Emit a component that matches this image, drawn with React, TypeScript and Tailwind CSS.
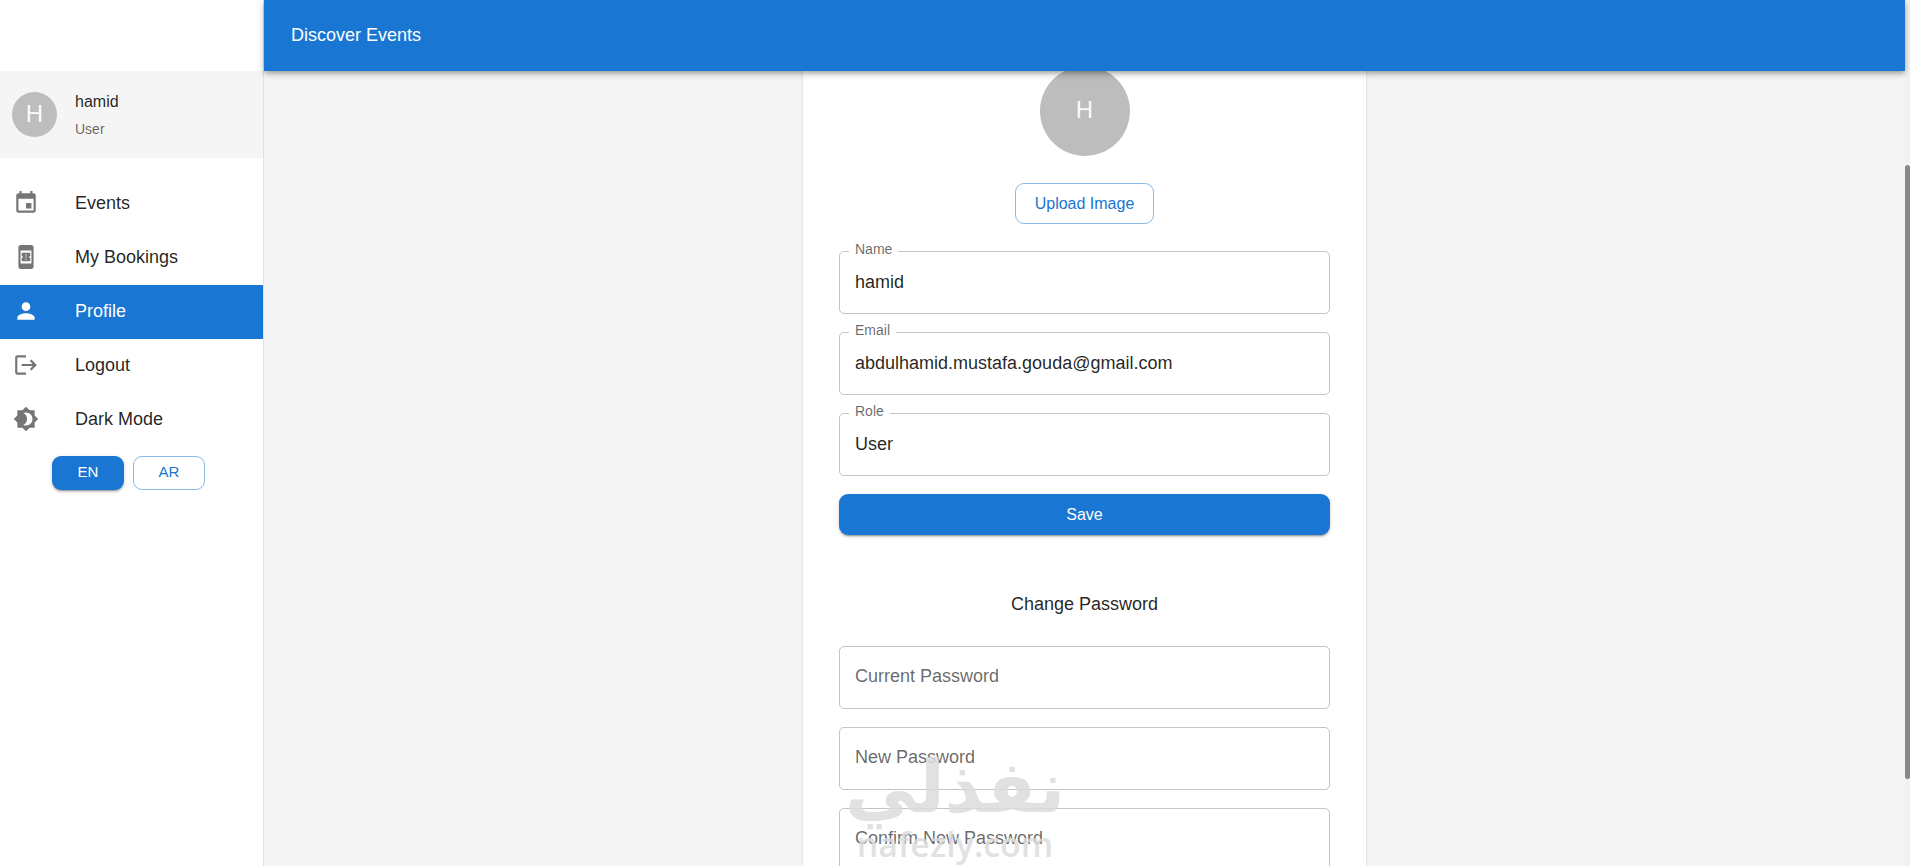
import type { InputHTMLAttributes } from "react";
import { MdBookOnline, MdBrightness4, MdEvent, MdLogout, MdPerson } from "react-icons/md";

const navItems = [
  { label: "Events", icon: MdEvent },
  { label: "My Bookings", icon: MdBookOnline },
  { label: "Profile", icon: MdPerson, active: true },
  { label: "Logout", icon: MdLogout },
  { label: "Dark Mode", icon: MdBrightness4 },
];

const profileFields = [
  { id: "name", label: "Name", value: "hamid", type: "text" },
  { id: "email", label: "Email", value: "abdulhamid.mustafa.gouda@gmail.com", type: "email" },
  { id: "role", label: "Role", value: "User", type: "text" },
];

const passwordFields = [
  { id: "current-password", label: "Current Password" },
  { id: "new-password", label: "New Password" },
  { id: "confirm-password", label: "Confirm New Password" },
];

function Sidebar() {
  return (
    <aside className="w-[264px] shrink-0 border-r border-[#e0e0e0] bg-white pt-[71px]">
      <div className="flex h-[87px] items-center gap-[18px] bg-[#f5f5f5] px-3">
        <div className="flex size-[45px] items-center justify-center rounded-full bg-[#bdbdbd] pb-0.5 text-2xl text-[#fafafa]">
          H
        </div>
        <div>
          <p className="text-base leading-7">hamid</p>
          <p className="text-sm leading-[26px] text-black/60">User</p>
        </div>
      </div>

      <nav className="mt-[19px]">
        {navItems.map(({ label, icon: Icon, active }) => (
          <a
            key={label}
            href="#"
            className={`flex h-[54px] items-center px-[13px] pb-0.5 text-lg ${active ? "bg-[#1976d2] text-white" : ""}`}
          >
            <span className={`w-[62px] ${active ? "text-white" : "text-black/54"}`}>
              <Icon size={26} />
            </span>
            {label}
          </a>
        ))}
      </nav>

      <div className="mt-[9px] flex gap-[9px] pl-[52px]">
        <button className="h-[34px] w-[72px] rounded-[9px] bg-[#1976d2] pb-0.5 text-[15px] text-white shadow-[0_3px_1px_-2px_rgba(0,0,0,0.2),0_2px_2px_0_rgba(0,0,0,0.14),0_1px_5px_0_rgba(0,0,0,0.12)]">
          EN
        </button>
        <button className="h-[34px] w-[72px] rounded-[9px] border border-[#1976d2]/50 pb-0.5 text-[15px] text-[#1976d2]">
          AR
        </button>
      </div>
    </aside>
  );
}

// Outlined input whose label sits in a notch of the border
function OutlinedField({ label, id, ...props }: InputHTMLAttributes<HTMLInputElement> & { label: string }) {
  return (
    <div className="relative">
      <label htmlFor={id} className="absolute -top-3 left-[10px] bg-white px-1.5 text-sm leading-5 text-black/60">
        {label}
      </label>
      <input
        id={id}
        {...props}
        className="block h-[63px] w-full rounded-[5px] border border-black/23 px-[15px] text-lg outline-none focus:border-[#1976d2]"
      />
    </div>
  );
}

// Empty password input, the label rests inside the box
function PasswordField({ label, id }: { label: string; id: string }) {
  return (
    <div className="relative">
      <label htmlFor={id} className="absolute top-4 left-4 text-lg text-black/60">
        {label}
      </label>
      <input
        id={id}
        type="password"
        className="block h-[63px] w-full rounded-[5px] border border-black/23 px-[15px] text-lg outline-none focus:border-[#1976d2]"
      />
    </div>
  );
}

function ProfileCard() {
  return (
    <section className="-mt-[41px] w-full max-w-[563px] rounded bg-white p-9 shadow-[0_2px_1px_-1px_rgba(0,0,0,0.2),0_1px_1px_0_rgba(0,0,0,0.14),0_1px_3px_0_rgba(0,0,0,0.12)]">
      <div className="flex flex-col items-center gap-[27px]">
        <div className="flex size-[90px] items-center justify-center rounded-full bg-[#bdbdbd] pb-0.5 text-2xl text-[#fafafa]">
          H
        </div>
        <button className="h-[41px] w-[139px] rounded-[9px] border border-[#1976d2]/50 text-base text-[#1976d2]">
          Upload Image
        </button>
      </div>

      <form className="mt-[27px] flex flex-col gap-[18px]">
        {profileFields.map(({ id, label, value, type }) => (
          <OutlinedField key={id} id={id} label={label} defaultValue={value} type={type} />
        ))}
        <button
          type="button"
          className="h-[41px] rounded-[9px] bg-[#1976d2] text-base text-white shadow-[0_3px_1px_-2px_rgba(0,0,0,0.2),0_2px_2px_0_rgba(0,0,0,0.14),0_1px_5px_0_rgba(0,0,0,0.12)]"
        >
          Save
        </button>
      </form>

      <h2 className="mt-[55px] text-center text-lg">Change Password</h2>
      <form className="mt-7 flex flex-col gap-[18px]">
        {passwordFields.map(({ id, label }) => (
          <PasswordField key={id} id={id} label={label} />
        ))}
      </form>
    </section>
  );
}

function Watermark() {
  return (
    <div className="pointer-events-none absolute bottom-1 left-[849px] z-20 flex w-[212px] flex-col items-center text-[#dcdcdc]/85">
      <span dir="rtl" lang="ar" className="font-['DejaVu_Sans',sans-serif] text-[72px] leading-[78px] font-bold">
        نفذلي
      </span>
      <span className="font-['Open_Sans',sans-serif] text-[34px] leading-9 font-semibold">nafezly.com</span>
    </div>
  );
}

export default function App() {
  return (
    <div className="relative flex h-screen overflow-hidden bg-[#f5f5f5] font-['Liberation_Sans',Arial,sans-serif] text-black/87">
      <Sidebar />
      <div className="flex min-w-0 flex-1 flex-col">
        <header className="z-10 flex h-[71px] shrink-0 items-center bg-[#1976d2] px-[27px] pb-0.5 text-lg font-medium text-white shadow-[0_2px_4px_-1px_rgba(0,0,0,0.2),0_4px_5px_0_rgba(0,0,0,0.14),0_1px_10px_0_rgba(0,0,0,0.12)]">
          <h1>Discover Events</h1>
        </header>
        <main className="flex flex-1 items-start justify-center">
          <ProfileCard />
        </main>
      </div>

      {/* Slim scrollbar */}
      <div className="flex w-[5px] shrink-0 flex-col bg-[#f1f1f1]">
        <div className="flex-[19]" />
        <div className="flex-[71] rounded-full bg-[#888]" />
        <div className="flex-[10]" />
      </div>

      <Watermark />
    </div>
  );
}
